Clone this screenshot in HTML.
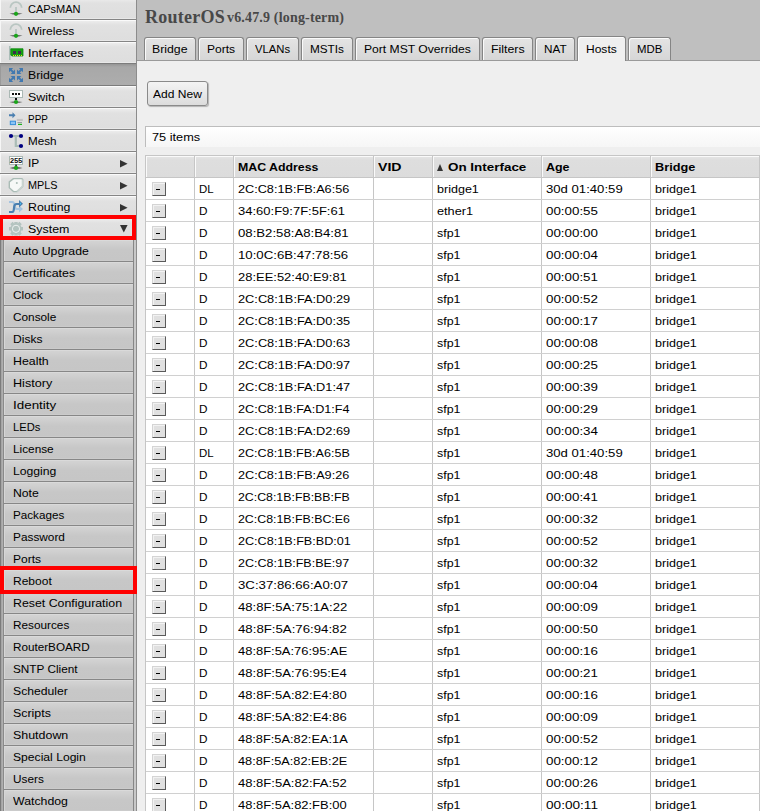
<!DOCTYPE html><html><head><meta charset="utf-8"><style>
*{box-sizing:border-box;margin:0;padding:0}
html,body{width:760px;height:811px;overflow:hidden;background:#efefef;font-family:"Liberation Sans",sans-serif;font-size:11px;color:#000}
.tx{position:absolute;line-height:14px;white-space:nowrap;transform-origin:0 0}
#side{position:absolute;left:0;top:0;width:137px;height:811px;background:#ddd;border-right:1px solid #8c8c8c;overflow:hidden}
.mi{position:absolute;left:0;width:136px;height:22px;border-bottom:1px solid #858585;background:linear-gradient(#fafafa 0,#fafafa 1px,#ececec 1px,#e1e1e1 5px,#dedede 20px,#e8e8e8 20px);box-shadow:inset 1px 0 0 #f6f6f6}
.mi.sel{background:linear-gradient(#959595,#a8a8a8 3px,#adadad);border-top:1px solid #7c7c7c;border-bottom-color:#7c7c7c;box-shadow:inset 1px 0 0 #9a9a9a}
.mi .ic{position:absolute;left:8px;top:2px;width:16px;height:16px}
.mi .ic svg{display:block;overflow:visible}
.arr{position:absolute;right:8.5px;top:8px;width:0;height:0}
.arr.r{border-top:3.75px solid transparent;border-bottom:3.75px solid transparent;border-left:7.5px solid #383838}
.arr.d{border-left:3.75px solid transparent;border-right:3.75px solid transparent;border-top:7.5px solid #383838;top:7px}
#sub{position:absolute;left:0;top:240px;width:136px;height:600px;background:linear-gradient(90deg,#7c7c7c 0,#7c7c7c 1px,#a0a0a0 1px,#b4b4b4 3px,#8a8a8a 3px,#8a8a8a 4px,#c8c8c8 4px)}
.si{position:absolute;left:4px;width:130px;height:22px;border-bottom:1px solid #878787;border-right:1px solid #878787;background:linear-gradient(#dadada 0,#dadada 1px,#d3d3d3 1px,#c7c7c7 10px,#c6c6c6 20px,#cbcbcb 20px);box-shadow:inset 1px 0 0 #d6d6d6}
#subr{position:absolute;left:134px;top:240px;width:2px;height:600px;background:#c8c8c8}
.red{position:absolute;border:4px solid #f00;}
#hdr{position:absolute;left:137px;top:0;width:623px;height:61px;background:#bfbfbf;border-bottom:1px solid #9a9a9a}
#t1,#t2{position:absolute;font-family:"Liberation Serif",serif;font-weight:bold;color:#484848;white-space:nowrap;line-height:20px}
#t1{left:8px;top:7px;font-size:18px;letter-spacing:0.25px}
#t2{left:90px;top:7.5px;font-size:14px;letter-spacing:0.17px}
.tab{position:absolute;top:37px;height:23px;border:1px solid #858585;border-bottom:none;border-radius:3px 3px 0 0;background:linear-gradient(#e4e4e4,#d6d6d6);box-shadow:inset 1px 1px 0 #fafafa}
.tab.act{top:36px;height:25px;background:#efefef;box-shadow:inset 1px 1px 0 #fcfcfc}
#btn{position:absolute;left:147px;top:81px;width:61px;height:25px;border:1px solid #8a8a8a;border-radius:3px;background:linear-gradient(#f4f4f4,#dcdcdc);box-shadow:1px 1px 1px rgba(0,0,0,.25)}
#items{position:absolute;left:145px;top:126px;width:620px;height:21px;border-top:1px solid #bdbdbd;border-left:1px solid #bdbdbd;background:linear-gradient(#fff,#f6f6f6);}
#tbl{position:absolute;left:145px;top:155px;width:615px;height:700px;border-left:1px solid #c6c6c6;border-right:1px solid #c6c6c6;border-top:1px solid #c6c6c6;background:#fff}
.hd{position:absolute;top:0;height:21px;background:linear-gradient(#e6e6e6,#dedede 4px,#dcdcdc);box-shadow:inset 1px 1px 0 #fafafa}
.vl{position:absolute;top:0;width:1px;height:700px;background:#c6c6c6}
.hl{position:absolute;left:0;width:614px;height:1px;background:#d0d0d0}
.mb{position:absolute;left:6px;width:14px;height:14px;border:1px solid;border-color:#d4d4d4 #5a5a5a #5a5a5a #d4d4d4;background:#e0e0e0;box-shadow:inset 1px 1px 0 #f2f2f2}
.mb i{position:absolute;left:3px;top:6px;width:4px;height:1px;background:#000}
.tri{position:absolute;width:0;height:0;border-left:3.5px solid transparent;border-right:3.5px solid transparent;border-bottom:7px solid #333}
</style></head><body>
<div id="side">
<div class="mi" style="top:-2px"><div class="ic"><svg width="16" height="18" viewBox="0 0 16 18"><path d="M2.3 7.8 A5.7 5.7 0 0 1 13.7 7.8" fill="none" stroke="#b9c6c2" stroke-width="1.8"/><rect x="7.1" y="7" width="1.8" height="6" fill="#b9c6c2"/><path d="M1.5 13.8 Q8 12.6 14.5 13.8 Q8 15 1.5 13.8z" fill="#111"/><circle cx="8" cy="13.8" r="2.1" fill="#1aa51a"/></svg></div></div>
<span class="tx" style="left:28.00px;top:2.20px">CAPsMAN</span>
<div class="mi" style="top:20px"><div class="ic"><svg width="16" height="18" viewBox="0 0 16 18"><path d="M2.3 7.8 A5.7 5.7 0 0 1 13.7 7.8" fill="none" stroke="#b9c6c2" stroke-width="1.8"/><rect x="7.1" y="7" width="1.8" height="6" fill="#b9c6c2"/><path d="M1.5 13.8 Q8 12.6 14.5 13.8 Q8 15 1.5 13.8z" fill="#111"/><circle cx="8" cy="13.8" r="2.1" fill="#1aa51a"/></svg></div></div>
<span class="tx" style="left:28.00px;top:24.20px;transform:scaleX(1.0951)">Wireless</span>
<div class="mi" style="top:42px"><div class="ic"><svg width="16" height="18" viewBox="0 0 16 18"><rect x="1" y="2" width="1.6" height="14" fill="#aabdb8"/><path d="M2.8 4.8 H15 V12 H3.8 L2.8 11 Z" fill="#13a013"/><path d="M2.8 4.8 H15 V12 H3.8 L2.8 11 Z" fill="none" stroke="#0a880a" stroke-width=".8"/><rect x="5" y="7" width="3" height="3" fill="#3c2f4a"/><rect x="10" y="7" width="3" height="3" fill="#3c2f4a"/><path d="M5 11h1v1h-1zM7 11h1v1h-1zM9 11h1v1h-1zM11 11h1v1h-1zM13 11h1v1h-1z" fill="#f0e020"/></svg></div></div>
<span class="tx" style="left:28.00px;top:46.20px;transform:scaleX(1.1528)">Interfaces</span>
<div class="mi sel" style="top:63px;height:23px"><div class="ic"><svg width="16" height="18" viewBox="0 0 16 18" fill="#4279b0"><g id="ar"><path d="M1 2H5.2L1 6.2Z"/><path d="M7 3.6V8H2.6Z"/><path d="M2 3L6 7" stroke="#4279b0" stroke-width="1.8"/></g><use href="#ar" transform="translate(16 0) scale(-1 1)"/><use href="#ar" transform="translate(0 18) scale(1 -1)"/><use href="#ar" transform="translate(16 18) scale(-1 -1)"/></svg></div></div>
<span class="tx" style="left:28.00px;top:68.20px;transform:scaleX(1.1170)">Bridge</span>
<div class="mi" style="top:86px"><div class="ic"><svg width="16" height="18" viewBox="0 0 16 18"><rect x="1.5" y="2.5" width="13" height="7" fill="#fff" stroke="#aab8b4" stroke-width="1"/><rect x="4" y="5" width="2" height="2" fill="#111"/><rect x="7" y="5" width="2" height="2" fill="#111"/><rect x="10" y="5" width="2" height="2" fill="#111"/><rect x="7" y="10" width="2" height="2" fill="#111"/><path d="M1.5 14 Q8 12.8 14.5 14 Q8 15.2 1.5 14z" fill="#111"/><circle cx="8" cy="14" r="2.1" fill="#1aa51a"/></svg></div></div>
<span class="tx" style="left:28.00px;top:90.20px;transform:scaleX(1.1286)">Switch</span>
<div class="mi" style="top:108px"><div class="ic"><svg width="16" height="18" viewBox="0 0 16 18"><path d="M1 4.3h3.5v-2l3 3l-3 3v-2h-3.5z" fill="#4a7fb0"/><rect x="1.8" y="10.7" width="6.2" height="4.4" fill="#3a8fd8"/><rect x="2.8" y="11.7" width="4.2" height="2.4" fill="#8cc4f4"/><rect x="8.8" y="8.9" width="6" height="2.1" fill="#c4c4c4"/><rect x="9.5" y="12" width="4.5" height="0.9" fill="#8a9a96"/><rect x="10" y="13.8" width="4" height="1.2" fill="#20b020"/></svg></div></div>
<span class="tx" style="left:28.00px;top:112.20px;transform:scaleX(0.9040)">PPP</span>
<div class="mi" style="top:130px"><div class="ic"><svg width="16" height="18" viewBox="0 0 16 18"><path d="M3 4H13M7.8 4V14H13" fill="none" stroke="#aabcb6" stroke-width="2.2"/><circle cx="3" cy="4" r="2.1" fill="#000080"/><circle cx="13" cy="4" r="2.1" fill="#000080"/><circle cx="13" cy="14" r="2.1" fill="#000080"/></svg></div></div>
<span class="tx" style="left:28.00px;top:134.20px;transform:scaleX(1.0604)">Mesh</span>
<div class="mi" style="top:152px"><div class="ic"><svg width="16" height="18" viewBox="0 0 16 18"><rect x="1.5" y="2.5" width="13" height="8" fill="#fff" stroke="#aab8b4"/><text x="8" y="8.9" font-family="Liberation Mono" font-weight="bold" font-size="7.5" text-anchor="middle" fill="#111" letter-spacing="-0.3">255</text><rect x="7.3" y="10.5" width="1.5" height="1.8" fill="#111"/><path d="M1.5 13.9 Q8 12.7 14.5 13.9 Q8 15.1 1.5 13.9z" fill="#111"/><circle cx="8" cy="13.9" r="2.1" fill="#1aa51a"/></svg></div><svg style="position:absolute;left:120px;top:8px" width="9" height="9"><path d="M0 0L7.6 3.8L0 7.6Z" fill="#333"/></svg></div>
<span class="tx" style="left:28.00px;top:156.20px;transform:scaleX(1.0838)">IP</span>
<div class="mi" style="top:174px"><div class="ic"><svg width="16" height="18" viewBox="0 0 16 18"><path d="M5.5 2.6h8.2l1 1v6.8l-5.6 5.2h-3.6l-4.2-3.9v-5.8z" fill="#f6f8f7" stroke="#aabcb6" stroke-width="1.4" stroke-linejoin="round"/><path d="M14.5 3.5v6.8l-5.6 5.2" fill="none" stroke="#c8d4d0" stroke-width="1.6"/><circle cx="8.8" cy="7" r="1" fill="#aabcb6"/></svg></div><svg style="position:absolute;left:120px;top:8px" width="9" height="9"><path d="M0 0L7.6 3.8L0 7.6Z" fill="#333"/></svg></div>
<span class="tx" style="left:28.00px;top:178.20px;transform:scaleX(0.9867)">MPLS</span>
<div class="mi" style="top:196px"><div class="ic"><svg width="16" height="18" viewBox="0 0 16 18"><path d="M1 4h3.2q2 0 2.3 3.5t2.5 3.5H11.5" fill="none" stroke="#a6c4e0" stroke-width="2.2"/><path d="M1 14h3.5q1.3 0 1.5-4t2.5-4H11.5" fill="none" stroke="#4a7fb0" stroke-width="2.2"/><path d="M11 7.5l4 3.5l-4 3.5z" fill="#a6c4e0"/><path d="M11 2l4 3.8l-4 3.8z" fill="#4a7fb0"/><rect x="12" y="4.8" width="1" height="1.6" fill="#40c0f0"/></svg></div><svg style="position:absolute;left:120px;top:8px" width="9" height="9"><path d="M0 0L7.6 3.8L0 7.6Z" fill="#333"/></svg></div>
<span class="tx" style="left:28.00px;top:200.20px;transform:scaleX(1.1196)">Routing</span>
<div class="mi" style="top:218px"><div class="ic"><svg width="16" height="18" viewBox="0 0 16 18"><g fill="#b3c3bf"><circle cx="8" cy="8.8" r="5.6"/><path d="M6.3 2h3.4v2h-3.4zM6.3 13.6h3.4v2h-3.4zM1 7.1h2v3.4h-2zM13 7.1h2v3.4h-2z"/><path d="M2.2 4.2l2.4-2.4 1.6 1.6-2.4 2.4zM11.4 1.8l2.4 2.4-1.6 1.6-2.4-2.4zM2.2 13.4l2.4 2.4 1.6-1.6-2.4-2.4zM13.8 13.4l-2.4 2.4-1.6-1.6 2.4-2.4z"/></g><circle cx="8" cy="8.8" r="3.6" fill="none" stroke="#eef2f1" stroke-width="1"/></svg></div><svg style="position:absolute;left:120px;top:7px" width="9" height="9"><path d="M0 0H7.6L3.8 7.6Z" fill="#333"/></svg></div>
<span class="tx" style="left:28.00px;top:222.20px;transform:scaleX(1.1278)">System</span>
</div>
<div id="sub">
<div class="si" style="top:0px"></div>
<div class="si" style="top:22px"></div>
<div class="si" style="top:44px"></div>
<div class="si" style="top:66px"></div>
<div class="si" style="top:88px"></div>
<div class="si" style="top:110px"></div>
<div class="si" style="top:132px"></div>
<div class="si" style="top:154px"></div>
<div class="si" style="top:176px"></div>
<div class="si" style="top:198px"></div>
<div class="si" style="top:220px"></div>
<div class="si" style="top:242px"></div>
<div class="si" style="top:264px"></div>
<div class="si" style="top:286px"></div>
<div class="si" style="top:308px"></div>
<div class="si" style="top:330px"></div>
<div class="si" style="top:352px"></div>
<div class="si" style="top:374px"></div>
<div class="si" style="top:396px"></div>
<div class="si" style="top:418px"></div>
<div class="si" style="top:440px"></div>
<div class="si" style="top:462px"></div>
<div class="si" style="top:484px"></div>
<div class="si" style="top:506px"></div>
<div class="si" style="top:528px"></div>
<div class="si" style="top:550px"></div>
</div>
<span class="tx" style="left:13.00px;top:244.20px;transform:scaleX(1.1173)">Auto Upgrade</span>
<span class="tx" style="left:13.00px;top:266.20px;transform:scaleX(1.1293)">Certificates</span>
<span class="tx" style="left:13.00px;top:288.20px;transform:scaleX(1.0766)">Clock</span>
<span class="tx" style="left:13.00px;top:310.20px;transform:scaleX(1.0728)">Console</span>
<span class="tx" style="left:13.00px;top:332.20px;transform:scaleX(1.0960)">Disks</span>
<span class="tx" style="left:13.00px;top:354.20px;transform:scaleX(1.1240)">Health</span>
<span class="tx" style="left:13.00px;top:376.20px;transform:scaleX(1.1461)">History</span>
<span class="tx" style="left:13.00px;top:398.20px;transform:scaleX(1.2180)">Identity</span>
<span class="tx" style="left:13.00px;top:420.20px;transform:scaleX(1.0146)">LEDs</span>
<span class="tx" style="left:13.00px;top:442.20px;transform:scaleX(1.0729)">License</span>
<span class="tx" style="left:13.00px;top:464.20px;transform:scaleX(1.1070)">Logging</span>
<span class="tx" style="left:13.00px;top:486.20px;transform:scaleX(1.1102)">Note</span>
<span class="tx" style="left:13.00px;top:508.20px;transform:scaleX(1.0607)">Packages</span>
<span class="tx" style="left:13.00px;top:530.20px;transform:scaleX(1.0752)">Password</span>
<span class="tx" style="left:13.00px;top:552.20px;transform:scaleX(1.0934)">Ports</span>
<span class="tx" style="left:13.00px;top:574.20px;transform:scaleX(1.0922)">Reboot</span>
<span class="tx" style="left:13.00px;top:596.20px;transform:scaleX(1.1212)">Reset Configuration</span>
<span class="tx" style="left:13.00px;top:618.20px;transform:scaleX(1.0705)">Resources</span>
<span class="tx" style="left:13.00px;top:640.20px;transform:scaleX(1.0636)">RouterBOARD</span>
<span class="tx" style="left:13.00px;top:662.20px;transform:scaleX(1.0709)">SNTP Client</span>
<span class="tx" style="left:13.00px;top:684.20px;transform:scaleX(1.1075)">Scheduler</span>
<span class="tx" style="left:13.00px;top:706.20px;transform:scaleX(1.1269)">Scripts</span>
<span class="tx" style="left:13.00px;top:728.20px;transform:scaleX(1.1298)">Shutdown</span>
<span class="tx" style="left:13.00px;top:750.20px;transform:scaleX(1.1024)">Special Login</span>
<span class="tx" style="left:13.00px;top:772.20px;transform:scaleX(1.0711)">Users</span>
<span class="tx" style="left:13.00px;top:794.20px;transform:scaleX(1.1177)">Watchdog</span>
<div id="subr"></div>
<div class="red" style="left:0;top:215px;width:136px;height:25px;border-left-width:3px"></div>
<div class="red" style="left:0;top:566px;width:137px;height:28px"></div>
<div id="hdr"><b id="t1">RouterOS</b><span id="t2">v6.47.9 (long-term)</span></div>
<div class="tab" style="left:144px;width:52px"></div>
<span class="tx" style="left:152.24px;top:42.20px;transform:scaleX(1.1170)">Bridge</span>
<div class="tab" style="left:198px;width:46px"></div>
<span class="tx" style="left:206.96px;top:42.20px;transform:scaleX(1.0934)">Ports</span>
<div class="tab" style="left:246px;width:53px"></div>
<span class="tx" style="left:254.93px;top:42.20px;transform:scaleX(1.0262)">VLANs</span>
<div class="tab" style="left:301px;width:52px"></div>
<span class="tx" style="left:310.03px;top:42.20px;transform:scaleX(1.0680)">MSTIs</span>
<div class="tab" style="left:355px;width:125px"></div>
<span class="tx" style="left:364.03px;top:42.20px;transform:scaleX(1.1025)">Port MST Overrides</span>
<div class="tab" style="left:482px;width:51px"></div>
<span class="tx" style="left:490.66px;top:42.20px;transform:scaleX(1.1245)">Filters</span>
<div class="tab" style="left:535px;width:40px"></div>
<span class="tx" style="left:543.74px;top:42.20px;transform:scaleX(1.0635)">NAT</span>
<div class="tab act" style="left:577px;width:49px"></div>
<span class="tx" style="left:586.13px;top:42.20px;transform:scaleX(1.0930)">Hosts</span>
<div class="tab" style="left:628px;width:43px"></div>
<span class="tx" style="left:636.85px;top:42.20px;transform:scaleX(1.0350)">MDB</span>
<div id="btn"></div>
<span class="tx" style="left:153.06px;top:87.20px;transform:scaleX(1.0952)">Add New</span>
<div id="items"></div>
<span class="tx" style="left:152.00px;top:130.20px;transform:scaleX(1.1595)">75 items</span>
<div id="tbl">
<div class="hd" style="left:0px;width:48px"></div>
<div class="hd" style="left:49px;width:38px"></div>
<div class="hd" style="left:88px;width:139px"></div>
<div class="hd" style="left:228px;width:58px"></div>
<div class="hd" style="left:287px;width:108px"></div>
<div class="hd" style="left:396px;width:108px"></div>
<div class="hd" style="left:505px;width:108px"></div>
<div class="hl" style="top:21px;background:#c6c6c6"></div>
<div class="vl" style="left:48px"></div>
<div class="vl" style="left:87px"></div>
<div class="vl" style="left:227px"></div>
<div class="vl" style="left:286px"></div>
<div class="vl" style="left:395px"></div>
<div class="vl" style="left:504px"></div>
<div class="hl" style="top:43px"></div>
<div class="mb" style="top:26px"><i></i></div>
<div class="hl" style="top:65px"></div>
<div class="mb" style="top:48px"><i></i></div>
<div class="hl" style="top:87px"></div>
<div class="mb" style="top:70px"><i></i></div>
<div class="hl" style="top:109px"></div>
<div class="mb" style="top:92px"><i></i></div>
<div class="hl" style="top:131px"></div>
<div class="mb" style="top:114px"><i></i></div>
<div class="hl" style="top:153px"></div>
<div class="mb" style="top:136px"><i></i></div>
<div class="hl" style="top:175px"></div>
<div class="mb" style="top:158px"><i></i></div>
<div class="hl" style="top:197px"></div>
<div class="mb" style="top:180px"><i></i></div>
<div class="hl" style="top:219px"></div>
<div class="mb" style="top:202px"><i></i></div>
<div class="hl" style="top:241px"></div>
<div class="mb" style="top:224px"><i></i></div>
<div class="hl" style="top:263px"></div>
<div class="mb" style="top:246px"><i></i></div>
<div class="hl" style="top:285px"></div>
<div class="mb" style="top:268px"><i></i></div>
<div class="hl" style="top:307px"></div>
<div class="mb" style="top:290px"><i></i></div>
<div class="hl" style="top:329px"></div>
<div class="mb" style="top:312px"><i></i></div>
<div class="hl" style="top:351px"></div>
<div class="mb" style="top:334px"><i></i></div>
<div class="hl" style="top:373px"></div>
<div class="mb" style="top:356px"><i></i></div>
<div class="hl" style="top:395px"></div>
<div class="mb" style="top:378px"><i></i></div>
<div class="hl" style="top:417px"></div>
<div class="mb" style="top:400px"><i></i></div>
<div class="hl" style="top:439px"></div>
<div class="mb" style="top:422px"><i></i></div>
<div class="hl" style="top:461px"></div>
<div class="mb" style="top:444px"><i></i></div>
<div class="hl" style="top:483px"></div>
<div class="mb" style="top:466px"><i></i></div>
<div class="hl" style="top:505px"></div>
<div class="mb" style="top:488px"><i></i></div>
<div class="hl" style="top:527px"></div>
<div class="mb" style="top:510px"><i></i></div>
<div class="hl" style="top:549px"></div>
<div class="mb" style="top:532px"><i></i></div>
<div class="hl" style="top:571px"></div>
<div class="mb" style="top:554px"><i></i></div>
<div class="hl" style="top:593px"></div>
<div class="mb" style="top:576px"><i></i></div>
<div class="hl" style="top:615px"></div>
<div class="mb" style="top:598px"><i></i></div>
<div class="hl" style="top:637px"></div>
<div class="mb" style="top:620px"><i></i></div>
<div class="hl" style="top:659px"></div>
<div class="mb" style="top:642px"><i></i></div>
</div>
<span class="tx" style="left:238.00px;top:160.20px;transform:scaleX(1.1214);font-weight:bold">MAC Address</span>
<span class="tx" style="left:378.00px;top:160.20px;transform:scaleX(1.2837);font-weight:bold">VID</span>
<span class="tx" style="left:448.00px;top:160.20px;transform:scaleX(1.2204);font-weight:bold">On Interface</span>
<span class="tx" style="left:546.00px;top:160.20px;transform:scaleX(1.1322);font-weight:bold">Age</span>
<span class="tx" style="left:655.00px;top:160.20px;transform:scaleX(1.1566);font-weight:bold">Bridge</span>
<i class="tri" style="left:437px;top:164px"></i>
<span class="tx" style="left:199.00px;top:182.20px;transform:scaleX(1.0389)">DL</span>
<span class="tx" style="left:238.00px;top:182.20px;transform:scaleX(1.1515)">2C:C8:1B:FB:A6:56</span>
<span class="tx" style="left:437.00px;top:182.20px;transform:scaleX(1.1397)">bridge1</span>
<span class="tx" style="left:546.00px;top:182.20px;transform:scaleX(1.1939)">30d 01:40:59</span>
<span class="tx" style="left:655.00px;top:182.20px;transform:scaleX(1.1397)">bridge1</span>
<span class="tx" style="left:199.00px;top:204.20px;transform:scaleX(1.0676)">D</span>
<span class="tx" style="left:238.00px;top:204.20px;transform:scaleX(1.1813)">34:60:F9:7F:5F:61</span>
<span class="tx" style="left:437.00px;top:204.20px;transform:scaleX(1.1575)">ether1</span>
<span class="tx" style="left:546.00px;top:204.20px;transform:scaleX(1.2136)">00:00:55</span>
<span class="tx" style="left:655.00px;top:204.20px;transform:scaleX(1.1397)">bridge1</span>
<span class="tx" style="left:199.00px;top:226.20px;transform:scaleX(1.0676)">D</span>
<span class="tx" style="left:238.00px;top:226.20px;transform:scaleX(1.1971)">08:B2:58:A8:B4:81</span>
<span class="tx" style="left:437.00px;top:226.20px;transform:scaleX(1.1280)">sfp1</span>
<span class="tx" style="left:546.00px;top:226.20px;transform:scaleX(1.2136)">00:00:00</span>
<span class="tx" style="left:655.00px;top:226.20px;transform:scaleX(1.1397)">bridge1</span>
<span class="tx" style="left:199.00px;top:248.20px;transform:scaleX(1.0676)">D</span>
<span class="tx" style="left:238.00px;top:248.20px;transform:scaleX(1.2007)">10:0C:6B:47:78:56</span>
<span class="tx" style="left:437.00px;top:248.20px;transform:scaleX(1.1280)">sfp1</span>
<span class="tx" style="left:546.00px;top:248.20px;transform:scaleX(1.2136)">00:00:04</span>
<span class="tx" style="left:655.00px;top:248.20px;transform:scaleX(1.1397)">bridge1</span>
<span class="tx" style="left:199.00px;top:270.20px;transform:scaleX(1.0676)">D</span>
<span class="tx" style="left:238.00px;top:270.20px;transform:scaleX(1.1780)">28:EE:52:40:E9:81</span>
<span class="tx" style="left:437.00px;top:270.20px;transform:scaleX(1.1280)">sfp1</span>
<span class="tx" style="left:546.00px;top:270.20px;transform:scaleX(1.2136)">00:00:51</span>
<span class="tx" style="left:655.00px;top:270.20px;transform:scaleX(1.1397)">bridge1</span>
<span class="tx" style="left:199.00px;top:292.20px;transform:scaleX(1.0676)">D</span>
<span class="tx" style="left:238.00px;top:292.20px;transform:scaleX(1.1612)">2C:C8:1B:FA:D0:29</span>
<span class="tx" style="left:437.00px;top:292.20px;transform:scaleX(1.1280)">sfp1</span>
<span class="tx" style="left:546.00px;top:292.20px;transform:scaleX(1.2136)">00:00:52</span>
<span class="tx" style="left:655.00px;top:292.20px;transform:scaleX(1.1397)">bridge1</span>
<span class="tx" style="left:199.00px;top:314.20px;transform:scaleX(1.0676)">D</span>
<span class="tx" style="left:238.00px;top:314.20px;transform:scaleX(1.1612)">2C:C8:1B:FA:D0:35</span>
<span class="tx" style="left:437.00px;top:314.20px;transform:scaleX(1.1280)">sfp1</span>
<span class="tx" style="left:546.00px;top:314.20px;transform:scaleX(1.2136)">00:00:17</span>
<span class="tx" style="left:655.00px;top:314.20px;transform:scaleX(1.1397)">bridge1</span>
<span class="tx" style="left:199.00px;top:336.20px;transform:scaleX(1.0676)">D</span>
<span class="tx" style="left:238.00px;top:336.20px;transform:scaleX(1.1612)">2C:C8:1B:FA:D0:63</span>
<span class="tx" style="left:437.00px;top:336.20px;transform:scaleX(1.1280)">sfp1</span>
<span class="tx" style="left:546.00px;top:336.20px;transform:scaleX(1.2136)">00:00:08</span>
<span class="tx" style="left:655.00px;top:336.20px;transform:scaleX(1.1397)">bridge1</span>
<span class="tx" style="left:199.00px;top:358.20px;transform:scaleX(1.0676)">D</span>
<span class="tx" style="left:238.00px;top:358.20px;transform:scaleX(1.1612)">2C:C8:1B:FA:D0:97</span>
<span class="tx" style="left:437.00px;top:358.20px;transform:scaleX(1.1280)">sfp1</span>
<span class="tx" style="left:546.00px;top:358.20px;transform:scaleX(1.2136)">00:00:25</span>
<span class="tx" style="left:655.00px;top:358.20px;transform:scaleX(1.1397)">bridge1</span>
<span class="tx" style="left:199.00px;top:380.20px;transform:scaleX(1.0676)">D</span>
<span class="tx" style="left:238.00px;top:380.20px;transform:scaleX(1.1612)">2C:C8:1B:FA:D1:47</span>
<span class="tx" style="left:437.00px;top:380.20px;transform:scaleX(1.1280)">sfp1</span>
<span class="tx" style="left:546.00px;top:380.20px;transform:scaleX(1.2136)">00:00:39</span>
<span class="tx" style="left:655.00px;top:380.20px;transform:scaleX(1.1397)">bridge1</span>
<span class="tx" style="left:199.00px;top:402.20px;transform:scaleX(1.0676)">D</span>
<span class="tx" style="left:238.00px;top:402.20px;transform:scaleX(1.1471)">2C:C8:1B:FA:D1:F4</span>
<span class="tx" style="left:437.00px;top:402.20px;transform:scaleX(1.1280)">sfp1</span>
<span class="tx" style="left:546.00px;top:402.20px;transform:scaleX(1.2136)">00:00:29</span>
<span class="tx" style="left:655.00px;top:402.20px;transform:scaleX(1.1397)">bridge1</span>
<span class="tx" style="left:199.00px;top:424.20px;transform:scaleX(1.0676)">D</span>
<span class="tx" style="left:238.00px;top:424.20px;transform:scaleX(1.1612)">2C:C8:1B:FA:D2:69</span>
<span class="tx" style="left:437.00px;top:424.20px;transform:scaleX(1.1280)">sfp1</span>
<span class="tx" style="left:546.00px;top:424.20px;transform:scaleX(1.2136)">00:00:34</span>
<span class="tx" style="left:655.00px;top:424.20px;transform:scaleX(1.1397)">bridge1</span>
<span class="tx" style="left:199.00px;top:446.20px;transform:scaleX(1.0389)">DL</span>
<span class="tx" style="left:238.00px;top:446.20px;transform:scaleX(1.1428)">2C:C8:1B:FB:A6:5B</span>
<span class="tx" style="left:437.00px;top:446.20px;transform:scaleX(1.1280)">sfp1</span>
<span class="tx" style="left:546.00px;top:446.20px;transform:scaleX(1.1939)">30d 01:40:59</span>
<span class="tx" style="left:655.00px;top:446.20px;transform:scaleX(1.1397)">bridge1</span>
<span class="tx" style="left:199.00px;top:468.20px;transform:scaleX(1.0676)">D</span>
<span class="tx" style="left:238.00px;top:468.20px;transform:scaleX(1.1515)">2C:C8:1B:FB:A9:26</span>
<span class="tx" style="left:437.00px;top:468.20px;transform:scaleX(1.1280)">sfp1</span>
<span class="tx" style="left:546.00px;top:468.20px;transform:scaleX(1.2136)">00:00:48</span>
<span class="tx" style="left:655.00px;top:468.20px;transform:scaleX(1.1397)">bridge1</span>
<span class="tx" style="left:199.00px;top:490.20px;transform:scaleX(1.0676)">D</span>
<span class="tx" style="left:238.00px;top:490.20px;transform:scaleX(1.1209)">2C:C8:1B:FB:BB:FB</span>
<span class="tx" style="left:437.00px;top:490.20px;transform:scaleX(1.1280)">sfp1</span>
<span class="tx" style="left:546.00px;top:490.20px;transform:scaleX(1.2136)">00:00:41</span>
<span class="tx" style="left:655.00px;top:490.20px;transform:scaleX(1.1397)">bridge1</span>
<span class="tx" style="left:199.00px;top:512.20px;transform:scaleX(1.0676)">D</span>
<span class="tx" style="left:238.00px;top:512.20px;transform:scaleX(1.1230)">2C:C8:1B:FB:BC:E6</span>
<span class="tx" style="left:437.00px;top:512.20px;transform:scaleX(1.1280)">sfp1</span>
<span class="tx" style="left:546.00px;top:512.20px;transform:scaleX(1.2136)">00:00:32</span>
<span class="tx" style="left:655.00px;top:512.20px;transform:scaleX(1.1397)">bridge1</span>
<span class="tx" style="left:199.00px;top:534.20px;transform:scaleX(1.0676)">D</span>
<span class="tx" style="left:238.00px;top:534.20px;transform:scaleX(1.1455)">2C:C8:1B:FB:BD:01</span>
<span class="tx" style="left:437.00px;top:534.20px;transform:scaleX(1.1280)">sfp1</span>
<span class="tx" style="left:546.00px;top:534.20px;transform:scaleX(1.2136)">00:00:52</span>
<span class="tx" style="left:655.00px;top:534.20px;transform:scaleX(1.1397)">bridge1</span>
<span class="tx" style="left:199.00px;top:556.20px;transform:scaleX(1.0676)">D</span>
<span class="tx" style="left:238.00px;top:556.20px;transform:scaleX(1.1369)">2C:C8:1B:FB:BE:97</span>
<span class="tx" style="left:437.00px;top:556.20px;transform:scaleX(1.1280)">sfp1</span>
<span class="tx" style="left:546.00px;top:556.20px;transform:scaleX(1.2136)">00:00:32</span>
<span class="tx" style="left:655.00px;top:556.20px;transform:scaleX(1.1397)">bridge1</span>
<span class="tx" style="left:199.00px;top:578.20px;transform:scaleX(1.0676)">D</span>
<span class="tx" style="left:238.00px;top:578.20px;transform:scaleX(1.2005)">3C:37:86:66:A0:07</span>
<span class="tx" style="left:437.00px;top:578.20px;transform:scaleX(1.1280)">sfp1</span>
<span class="tx" style="left:546.00px;top:578.20px;transform:scaleX(1.2136)">00:00:04</span>
<span class="tx" style="left:655.00px;top:578.20px;transform:scaleX(1.1397)">bridge1</span>
<span class="tx" style="left:199.00px;top:600.20px;transform:scaleX(1.0676)">D</span>
<span class="tx" style="left:238.00px;top:600.20px;transform:scaleX(1.1916)">48:8F:5A:75:1A:22</span>
<span class="tx" style="left:437.00px;top:600.20px;transform:scaleX(1.1280)">sfp1</span>
<span class="tx" style="left:546.00px;top:600.20px;transform:scaleX(1.2136)">00:00:09</span>
<span class="tx" style="left:655.00px;top:600.20px;transform:scaleX(1.1397)">bridge1</span>
<span class="tx" style="left:199.00px;top:622.20px;transform:scaleX(1.0676)">D</span>
<span class="tx" style="left:238.00px;top:622.20px;transform:scaleX(1.2018)">48:8F:5A:76:94:82</span>
<span class="tx" style="left:437.00px;top:622.20px;transform:scaleX(1.1280)">sfp1</span>
<span class="tx" style="left:546.00px;top:622.20px;transform:scaleX(1.2136)">00:00:50</span>
<span class="tx" style="left:655.00px;top:622.20px;transform:scaleX(1.1397)">bridge1</span>
<span class="tx" style="left:199.00px;top:644.20px;transform:scaleX(1.0676)">D</span>
<span class="tx" style="left:238.00px;top:644.20px;transform:scaleX(1.1755)">48:8F:5A:76:95:AE</span>
<span class="tx" style="left:437.00px;top:644.20px;transform:scaleX(1.1280)">sfp1</span>
<span class="tx" style="left:546.00px;top:644.20px;transform:scaleX(1.2136)">00:00:16</span>
<span class="tx" style="left:655.00px;top:644.20px;transform:scaleX(1.1397)">bridge1</span>
<span class="tx" style="left:199.00px;top:666.20px;transform:scaleX(1.0676)">D</span>
<span class="tx" style="left:238.00px;top:666.20px;transform:scaleX(1.1853)">48:8F:5A:76:95:E4</span>
<span class="tx" style="left:437.00px;top:666.20px;transform:scaleX(1.1280)">sfp1</span>
<span class="tx" style="left:546.00px;top:666.20px;transform:scaleX(1.2136)">00:00:21</span>
<span class="tx" style="left:655.00px;top:666.20px;transform:scaleX(1.1397)">bridge1</span>
<span class="tx" style="left:199.00px;top:688.20px;transform:scaleX(1.0676)">D</span>
<span class="tx" style="left:238.00px;top:688.20px;transform:scaleX(1.1853)">48:8F:5A:82:E4:80</span>
<span class="tx" style="left:437.00px;top:688.20px;transform:scaleX(1.1280)">sfp1</span>
<span class="tx" style="left:546.00px;top:688.20px;transform:scaleX(1.2136)">00:00:16</span>
<span class="tx" style="left:655.00px;top:688.20px;transform:scaleX(1.1397)">bridge1</span>
<span class="tx" style="left:199.00px;top:710.20px;transform:scaleX(1.0676)">D</span>
<span class="tx" style="left:238.00px;top:710.20px;transform:scaleX(1.1853)">48:8F:5A:82:E4:86</span>
<span class="tx" style="left:437.00px;top:710.20px;transform:scaleX(1.1280)">sfp1</span>
<span class="tx" style="left:546.00px;top:710.20px;transform:scaleX(1.2136)">00:00:09</span>
<span class="tx" style="left:655.00px;top:710.20px;transform:scaleX(1.1397)">bridge1</span>
<span class="tx" style="left:199.00px;top:732.20px;transform:scaleX(1.0676)">D</span>
<span class="tx" style="left:238.00px;top:732.20px;transform:scaleX(1.1659)">48:8F:5A:82:EA:1A</span>
<span class="tx" style="left:437.00px;top:732.20px;transform:scaleX(1.1280)">sfp1</span>
<span class="tx" style="left:546.00px;top:732.20px;transform:scaleX(1.2136)">00:00:52</span>
<span class="tx" style="left:655.00px;top:732.20px;transform:scaleX(1.1397)">bridge1</span>
<span class="tx" style="left:199.00px;top:754.20px;transform:scaleX(1.0676)">D</span>
<span class="tx" style="left:238.00px;top:754.20px;transform:scaleX(1.1600)">48:8F:5A:82:EB:2E</span>
<span class="tx" style="left:437.00px;top:754.20px;transform:scaleX(1.1280)">sfp1</span>
<span class="tx" style="left:546.00px;top:754.20px;transform:scaleX(1.2136)">00:00:12</span>
<span class="tx" style="left:655.00px;top:754.20px;transform:scaleX(1.1397)">bridge1</span>
<span class="tx" style="left:199.00px;top:776.20px;transform:scaleX(1.0676)">D</span>
<span class="tx" style="left:238.00px;top:776.20px;transform:scaleX(1.1843)">48:8F:5A:82:FA:52</span>
<span class="tx" style="left:437.00px;top:776.20px;transform:scaleX(1.1280)">sfp1</span>
<span class="tx" style="left:546.00px;top:776.20px;transform:scaleX(1.2136)">00:00:26</span>
<span class="tx" style="left:655.00px;top:776.20px;transform:scaleX(1.1397)">bridge1</span>
<span class="tx" style="left:199.00px;top:798.20px;transform:scaleX(1.0676)">D</span>
<span class="tx" style="left:238.00px;top:798.20px;transform:scaleX(1.1768)">48:8F:5A:82:FB:00</span>
<span class="tx" style="left:437.00px;top:798.20px;transform:scaleX(1.1280)">sfp1</span>
<span class="tx" style="left:546.00px;top:798.20px;transform:scaleX(1.2372)">00:00:11</span>
<span class="tx" style="left:655.00px;top:798.20px;transform:scaleX(1.1397)">bridge1</span>
</body></html>
